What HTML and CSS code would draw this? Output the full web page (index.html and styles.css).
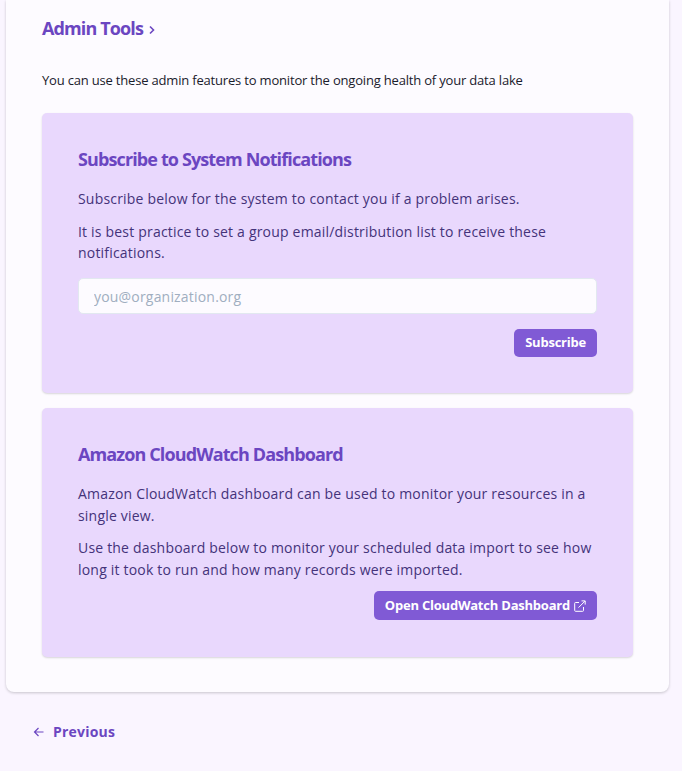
FILE: index.html
```html
<!DOCTYPE html>
<html lang="en">
<head>
<meta charset="utf-8">
<title>Admin Tools</title>
<link rel="stylesheet" href="styles.css">
</head>
<body>
<main class="panel">
  <h1 class="title">Admin Tools <svg class="chevron" viewBox="0 0 8 10"><path d="M2 1.5l3.5 3.5-3.5 3.5"/></svg></h1>
  <p class="intro">You can use these admin features to monitor the ongoing health of your data lake</p>
  <section class="card subscribe">
    <h2>Subscribe to System Notifications</h2>
    <p>Subscribe below for the system to contact you if a problem arises.</p>
    <p>It is best practice to set a group email/distribution list to receive these notifications.</p>
    <input class="email" type="email" placeholder="you@organization.org">
    <div class="actions"><button class="btn">Subscribe</button></div>
  </section>
  <section class="card dashboard">
    <h2>Amazon CloudWatch Dashboard</h2>
    <p>Amazon CloudWatch dashboard can be used to monitor your resources in a single view.</p>
    <p>Use the dashboard below to monitor your scheduled data import to see how long it took to run and how many records were imported.</p>
    <div class="actions"><button class="btn">Open CloudWatch Dashboard <svg class="external" viewBox="0 0 12 12"><path d="M5 2.5H1.5a.8.8 0 0 0-.8.8v7.2a.8.8 0 0 0 .8.8h7.2a.8.8 0 0 0 .8-.8V7M7.5.9h3.7v3.7M11 1.1L4.5 7.6"/></svg></button></div>
  </section>
</main>
<a class="previous"><svg class="arrow" viewBox="0 0 11 10"><path d="M10.5 5H1.5M5.5 1L1.5 5l4 4"/></svg>Previous</a>
</body>
</html>
```
FILE: styles.css
```css
* { box-sizing: border-box; }
body { margin: 0; background: #faf5ff; font-family: "Open Sans", sans-serif; color: #1a202c; }
h1, h2, p { margin: 0; }
.panel { margin: 0 12px 0 6px; width: 663px; height: 692px; padding: 16px 36px 0; background: #fdfbff; border-radius: 0 0 8px 8px; box-shadow: 0 1px 3px rgba(0,0,0,.2); }
.title { font: 700 18px/25px "Open Sans", sans-serif; letter-spacing: -.88px; color: #6b46c1; }
.chevron { width: 8px; height: 10px; margin-left: 1px; fill: none; stroke: #6b46c1; stroke-width: 1.6; }
.intro { margin-top: 29px; font-size: 13px; line-height: 20px; letter-spacing: -.185px; }
.card { width: 591px; background: #e9d8fd; border-radius: 5px; padding: 34px 36px 0; box-shadow: 0 1px 2px rgba(0,0,0,.15); }
.subscribe { margin-top: 23px; height: 280px; }
.dashboard { margin-top: 15px; height: 249px; }
.card h2 { font: 700 18px/25px "Open Sans", sans-serif; letter-spacing: -.88px; color: #6b46c1; }
.card p { margin-top: 11px; font: 14px/21.6px "Open Sans", sans-serif; letter-spacing: .195px; color: #44337a; }
.card h2 + p { margin-top: 16px; }
.email { display: block; width: 519px; height: 36px; margin-top: 14px; padding: 1px 15px 0; border: 1px solid #e2e8f0; border-radius: 5px; background: #fdfbff; font: 14px "Open Sans", sans-serif; letter-spacing: .19px; }
.email::placeholder { color: #a0aec0; opacity: 1; }
.actions { display: flex; justify-content: flex-end; margin-top: 15px; }
.dashboard .actions { margin-top: 11px; }
.btn { display: flex; align-items: center; height: 28px; padding: 0 11px 2px; border: 0; border-radius: 5px; background: #805ad5; color: #fff; font: 700 13px "Open Sans", sans-serif; letter-spacing: -.22px; }
.dashboard .btn { height: 29px; padding-bottom: 1px; }
.external { width: 12px; height: 12px; margin: 1px 0 0 4px; fill: none; stroke: #fff; }
.previous { display: inline-flex; align-items: center; margin: 30px 0 0 33px; font: 700 14px/20px "Open Sans", sans-serif; letter-spacing: .2px; color: #6b46c1; }
.arrow { width: 11px; height: 10px; margin-right: 9px; fill: none; stroke: #6b46c1; stroke-width: 1.2; }
```
